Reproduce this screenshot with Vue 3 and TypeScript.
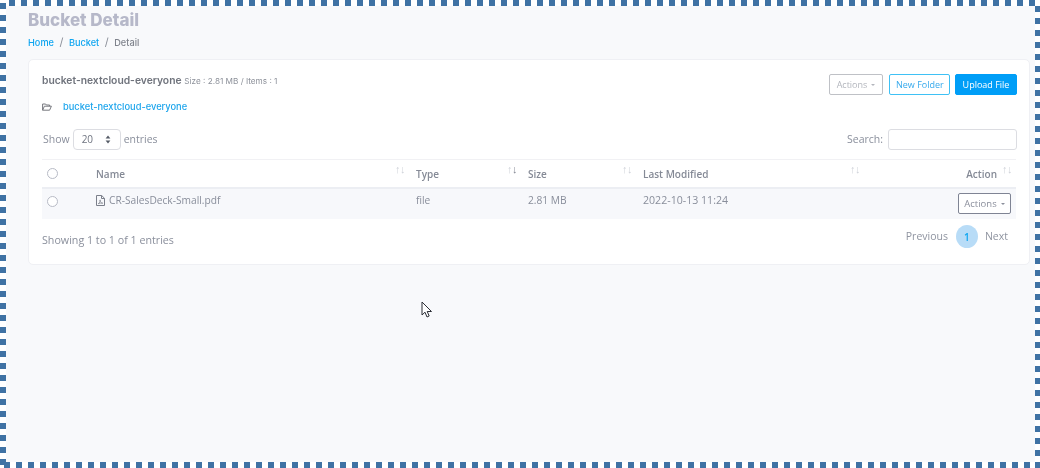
<script setup lang="ts">
interface Col { label: string; align?: string; dark?: boolean }
const cols: Col[] = [
  { label: 'Name' },
  { label: 'Type', dark: true },
  { label: 'Size' },
  { label: 'Last Modified' },
  { label: 'Action', align: 'right' },
]
</script>

<template>
  <div class="frame">
    <div class="page">
      <h1 class="title">Bucket Detail</h1>
      <nav class="crumbs">
        <a>Home</a><span class="sep">/</span><a>Bucket</a><span class="sep">/</span><span class="cur">Detail</span>
      </nav>

      <section class="card">
        <div class="card-head">
          <div>
            <div class="bucket"><strong>bucket-nextcloud-everyone</strong> <small>Size : 2.81 MB / Items : 1</small></div>
            <div class="path">
              <svg class="folder" width="10" height="8" viewBox="0 0 10 8" fill="none" stroke="#77797f" stroke-width="1">
                <path d="M.6 7.2V1h3l.8 1h3.2v1.2" />
                <path d="M.6 7.2h7l1.8-4H2.4z" />
              </svg>
              <a>bucket-nextcloud-everyone</a>
            </div>
          </div>
          <div class="head-btns">
            <button class="btn ghost">Actions<i class="caret"></i></button>
            <button class="btn outline">New Folder</button>
            <button class="btn solid">Upload File</button>
          </div>
        </div>

        <div class="controls">
          <label class="show">Show
            <span class="select">20
              <svg width="6" height="9" viewBox="0 0 6 9" fill="#555b66"><path d="M3 .6 5.4 3.6H.6zM3 8.4.6 5.4h4.800z" /></svg>
            </span>
            entries</label>
          <label class="search">Search:<span class="input"></span></label>
        </div>

        <table class="table">
          <colgroup>
            <col class="c0" /><col class="c1" /><col class="c2" /><col class="c3" /><col class="c4" /><col />
          </colgroup>
          <thead>
            <tr>
              <th><span class="radio"></span></th>
              <th v-for="c in cols" :key="c.label" :class="{ right: c.align === 'right' }">
                {{ c.label }}
                <span class="sort"><b>↑</b><b :class="{ on: c.dark }">↓</b></span>
              </th>
            </tr>
          </thead>
          <tbody>
            <tr>
              <td><span class="radio"></span></td>
              <td>
                <span class="file">
                  <svg width="9" height="11" viewBox="0 0 9 11" fill="none" stroke="#7b7f8a" stroke-width="1">
                    <path d="M.5.5h5.200L8.500 3.300v7.200h-8z" />
                    <path d="M5.500.5v3h3" />
                    <path d="M2.200 8.700c1.400-.8 2.200-2.300 2.200-3.400 0-.6-.6-.6-.6 0 0 1.400 1.300 2.600 3 2.900-1.500-.3-3.200 0-4.600.5z" stroke-width=".7" />
                  </svg>
                  CR-SalesDeck-Small.pdf
                </span>
              </td>
              <td>file</td>
              <td>2.81 MB</td>
              <td class="date">2022-10-13 11:24</td>
              <td class="right"><button class="btn row-btn">Actions<i class="caret"></i></button></td>
            </tr>
          </tbody>
        </table>

        <div class="foot">
          <span class="info">Showing 1 to 1 of 1 entries</span>
          <div class="pager">
            <span>Previous</span>
            <span class="page-num">1</span>
            <span class="next">Next</span>
          </div>
        </div>
      </section>
    </div>

    <svg class="cursor" width="12" height="18" viewBox="0 0 12 18">
      <path d="M1 1v13l3-2.800 2 4.800 2.200-1-2-4.500h4.300z" fill="#fff" stroke="#2c2f36" stroke-width="1" stroke-linejoin="round" />
    </svg>
  </div>
</template>

<style>
html, body { margin: 0; background: #fff; }
</style>

<style scoped>
.frame {
  position: relative;
  box-sizing: border-box;
  width: 1040px;
  height: 468px;
  overflow: hidden;
  padding: 6px 5px 6px 6px;
  font-family: "Open Sans", "Noto Sans", sans-serif;
  color: #7e8299;
  background-color: #fff;
  background-image:
    repeating-linear-gradient(90deg, #3f72a4 0 6px, transparent 6px 12px),
    repeating-linear-gradient(90deg, #3f72a4 0 6px, transparent 6px 12px),
    repeating-linear-gradient(180deg, #3f72a4 0 6px, transparent 6px 12px),
    repeating-linear-gradient(180deg, #3f72a4 0 6px, transparent 6px 12px);
  background-size: 100% 6px, 100% 6px, 6px 100%, 5px 100%;
  background-repeat: no-repeat;
  background-position: 9px 0, 4px 100%, 0 3px, 100% 6px;
}
.page {
  box-sizing: border-box;
  height: 100%;
  background: #f8f9fb;
  padding: 5px 5px 0 22px;
  filter: blur(0.4px);
}
.title {
  margin: 0;
  font-family: Inter, "Open Sans", sans-serif;
  font-size: 17px;
  line-height: 19px;
  font-weight: 800;
  color: #b6b8c9;
}
.crumbs {
  margin-top: 5px;
  font-family: Inter, sans-serif;
  font-size: 9.200px;
  line-height: 14px;
  color: #0ea5f0;
  font-weight: 500;
}
.sep { color: #8b8f99; margin: 0 5.500px; font-size: 11px; font-weight: 400; }
.cur { color: #7f838c; }
.card {
  box-sizing: border-box;
  height: 206px;
  margin-top: 9px;
  background: #fff;
  border: 1px solid #eff0f4;
  border-radius: 5px;
  padding: 13px 12px 0 13px;
}
.card-head { display: flex; justify-content: space-between; }
.bucket { font-family: Inter, sans-serif; font-size: 10px; line-height: 14px; color: #6f737c; }
.bucket strong { font-size: 10.300px; font-weight: 600; }
.bucket small { font-size: 8.200px; color: #8d919a; }
.path { display: flex; align-items: center; margin-top: 12px; font-family: Inter, sans-serif; font-size: 9.300px; line-height: 14px; font-weight: 500; color: #1da5ec; }
.folder { margin-right: 11px; }
.head-btns { display: flex; gap: 5px; margin-top: 1px; }
.btn {
  box-sizing: border-box;
  height: 21px;
  padding: 0 6px;
  border-radius: 2px;
  border: 1px solid;
  background: #fff;
  font-family: "Open Sans", sans-serif;
  font-size: 9px;
  white-space: nowrap;
}
.ghost { width: 54px; margin-right: 1px; border-color: #bfc1c6; color: #b3b6bd; }
.outline { width: 61px; border-color: #3fc1f5; color: #35a9ec; }
.solid { width: 62px; background: #009ef7; border-color: #009ef7; color: #fff; font-weight: 500; }
.caret {
  display: inline-block;
  margin-left: 4px;
  vertical-align: 2px;
  border: 2.500px solid transparent;
  border-top-color: currentColor;
  border-bottom-width: 0;
}
.controls {
  display: flex;
  justify-content: space-between;
  align-items: center;
  margin-top: 14px;
  height: 22px;
  font-size: 10.500px;
  color: #8a8f9c;
}
.show { display: flex; align-items: center; gap: 3px; padding-left: 1px; }
.select {
  box-sizing: border-box;
  width: 48px;
  height: 21px;
  border: 1px solid #dcdde2;
  border-radius: 4px;
  display: flex;
  align-items: center;
  justify-content: space-between;
  padding: 0 9px 0 8px;
  font-size: 10px;
  color: #6f7480;
}
.search { display: flex; align-items: center; gap: 5px; }
.input {
  box-sizing: border-box;
  width: 129px;
  height: 21px;
  border: 1px solid #dcdde2;
  border-radius: 3px;
}
.table {
  width: 974px;
  margin-top: 9px;
  table-layout: fixed;
  border-collapse: collapse;
  font-size: 10.200px;
}
.c0 { width: 54px; }
.c1 { width: 320px; }
.c2 { width: 112px; }
.c3 { width: 115px; }
.c4 { width: 228px; }
th {
  position: relative;
  height: 27px;
  padding: 0;
  text-align: left;
  font-weight: 600;
  font-size: 10px;
  color: #858a96;
  border-top: 1px solid #f1f1f4;
  border-bottom: 2px solid #eceef3;
}
td {
  height: 31px;
  padding: 5px 0 0;
  box-sizing: border-box;
  vertical-align: top;
  line-height: 13px;
  background: #f7f8fb;
  color: #898e9b;
}
td.date { font-size: 10.600px; }
th.right { text-align: right; padding-right: 19px; }
td.right { text-align: right; padding: 4px 5px 0 0; }
td .radio { margin-top: 2px; }
.radio {
  display: block;
  box-sizing: border-box;
  width: 11px;
  height: 11px;
  margin-left: 5px;
  border: 1px solid #b8bbc6;
  border-radius: 50%;
  background: #fff;
}
.sort {
  position: absolute;
  right: 11px;
  top: 3px;
  display: flex;
  font-size: 11px;
  line-height: 12px;
  color: #cfd2d9;
}
.sort b { font-weight: 400; display: block; width: 5px; }
.sort b.on { color: #858994; }
th.right .sort { right: 4px; }
.file { display: inline-flex; align-items: center; gap: 4px; }
.row-btn { width: 53px; border-color: #7f8494; color: #8b8f9c; border-radius: 2px; padding: 0 5px; font-size: 9.500px; }
.foot {
  display: flex;
  justify-content: space-between;
  align-items: center;
  margin-top: 6px;
  font-size: 10.700px;
  color: #8a8f9c;
}
.info { position: relative; top: 3px; }
.pager { display: flex; align-items: center; gap: 8px; margin-right: 9px; color: #8f94a0; font-size: 10.500px; line-height: 12px; }
.pager > span:not(.page-num) { margin-top: -1px; }
.pager .next { margin-left: -1px; }
.page-num {
  width: 22px;
  height: 23px;
  border-radius: 50%;
  background: #b8dcf7;
  color: #0ea5f0;
  font-size: 10px;
  font-weight: 600;
  display: flex;
  align-items: center;
  justify-content: center;
}
.cursor { position: absolute; left: 421px; top: 301px; }
</style>
